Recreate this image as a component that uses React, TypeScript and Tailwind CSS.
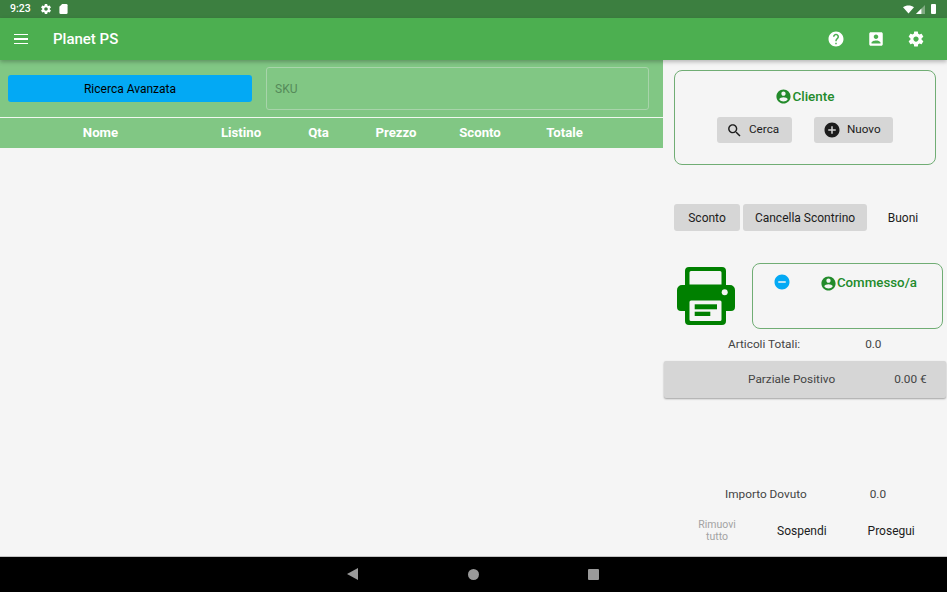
const ACCOUNT_CIRCLE =
  "M12 2C6.48 2 2 6.48 2 12s4.48 10 10 10 10-4.48 10-10S17.52 2 12 2zm0 3c1.66 0 3 1.34 3 3s-1.34 3-3 3-3-1.34-3-3 1.34-3 3-3zm0 14.2c-2.5 0-4.71-1.28-6-3.22.03-1.99 4-3.08 6-3.08 1.99 0 5.97 1.09 6 3.08-1.29 1.94-3.5 3.22-6 3.22z";
const HELP =
  "M12 2C6.48 2 2 6.48 2 12s4.48 10 10 10 10-4.48 10-10S17.52 2 12 2zm1 17h-2v-2h2v2zm2.07-7.75l-.9.92C13.45 12.9 13 13.5 13 15h-2v-.5c0-1.1.45-2.1 1.17-2.83l1.24-1.26c.37-.36.59-.86.59-1.41 0-1.1-.9-2-2-2s-2 .9-2 2H8c0-2.21 1.79-4 4-4s4 1.79 4 4c0 .88-.36 1.68-.93 2.25z";
const ACCOUNT_BOX =
  "M3 5v14c0 1.1.89 2 2 2h14c1.1 0 2-.9 2-2V5c0-1.1-.9-2-2-2H5c-1.11 0-2 .9-2 2zm12 4c0 1.66-1.34 3-3 3s-3-1.34-3-3 1.34-3 3-3 3 1.34 3 3zm-9 8c0-2 4-3.1 6-3.1s6 1.1 6 3.1v1H6v-1z";
const SETTINGS =
  "M19.43 12.98c.04-.32.07-.64.07-.98s-.03-.66-.07-.98l2.11-1.65c.19-.15.24-.42.12-.64l-2-3.46c-.12-.22-.39-.3-.61-.22l-2.49 1c-.52-.4-1.08-.73-1.69-.98l-.38-2.65C14.46 2.18 14.25 2 14 2h-4c-.25 0-.46.18-.49.42l-.38 2.65c-.61.25-1.17.59-1.69.98l-2.49-1c-.23-.09-.49 0-.61.22l-2 3.46c-.13.22-.07.49.12.64l2.11 1.65c-.04.32-.07.65-.07.98s.03.66.07.98l-2.11 1.65c-.19.15-.24.42-.12.64l2 3.46c.12.22.39.3.61.22l2.49-1c.52.4 1.08.73 1.69.98l.38 2.65c.03.24.24.42.49.42h4c.25 0 .46-.18.49-.42l.38-2.65c.61-.25 1.17-.59 1.69-.98l2.49 1c.23.09.49 0 .61-.22l2-3.46c.12-.22.07-.49-.12-.64l-2.11-1.65zM12 15.5c-1.93 0-3.5-1.57-3.5-3.5s1.57-3.5 3.5-3.5 3.5 1.57 3.5 3.5-1.57 3.5-3.5 3.5z";
const SEARCH =
  "M15.5 14h-.79l-.28-.27C15.41 12.59 16 11.11 16 9.5 16 5.91 13.09 3 9.5 3S3 5.91 3 9.5 5.91 16 9.5 16c1.61 0 3.09-.59 4.23-1.57l.27.28v.79l5 4.99L20.49 19l-4.99-5zm-6 0C7.01 14 5 11.99 5 9.5S7.01 5 9.5 5 14 7.01 14 9.5 11.99 14 9.5 14z";
const ADD_CIRCLE =
  "M12 2C6.48 2 2 6.48 2 12s4.48 10 10 10 10-4.48 10-10S17.52 2 12 2zm5 11h-4v4h-2v-4H7v-2h4V7h2v4h4v2z";
const REMOVE_CIRCLE =
  "M12 2C6.48 2 2 6.48 2 12s4.48 10 10 10 10-4.48 10-10S17.52 2 12 2zm5 11H7v-2h10v2z";

function Icon({ d, className }: { d: string; className: string }) {
  return (
    <svg viewBox="0 0 24 24" fill="currentColor" className={className}>
      <path d={d} />
    </svg>
  );
}

function StatusBar() {
  return (
    <div className="flex h-[18px] shrink-0 items-center bg-[#3c7f40] pl-[10px] pr-[11px] text-white">
      <span className="pt-px text-[10.5px] font-medium leading-none">9:23</span>
      <Icon d={SETTINGS} className="ml-[9px] h-[12px] w-[12px]" />
      <svg viewBox="0 0 9 11" fill="currentColor" className="ml-[7px] h-[10px] w-[9px]">
        <path d="M3 0h4.500A1.500 1.500 0 0 1 9 1.500v8A1.500 1.500 0 0 1 7.500 11h-6A1.500 1.500 0 0 1 0 9.500V3z" />
      </svg>
      <div className="ml-auto flex items-center">
        <svg viewBox="0 0 14 10" fill="currentColor" className="h-[9px] w-[11px]">
          <path d="M0 2.200C2 .8 4.400 0 7 0s5 .8 7 2.200L7 10z" />
        </svg>
        <svg viewBox="0 0 10 10" className="ml-[2px] h-[9px] w-[9px]">
          <path d="M10 0v10H0z" fill="#fff" fillOpacity="0.35" />
          <path d="M6 4v6H0z" fill="#fff" />
        </svg>
        <div className="ml-[6px] h-[10px] w-[5px] rounded-[1px] bg-white" />
      </div>
    </div>
  );
}

function AppBar() {
  return (
    <div className="relative z-10 flex h-[42px] shrink-0 items-center bg-[#4caf50] pl-[14px] pr-[22px] text-white shadow-[0_2px_4px_rgba(0,0,0,0.25)]">
      <div className="flex w-[14px] flex-col gap-[3px]">
        <div className="h-[1.5px] bg-white" />
        <div className="h-[1.5px] bg-white" />
        <div className="h-[1.5px] bg-white" />
      </div>
      <span className="ml-[25px] text-[15px] font-medium">Planet PS</span>
      <div className="ml-auto flex items-center gap-[22px]">
        <Icon d={HELP} className="h-[18px] w-[18px]" />
        <Icon d={ACCOUNT_BOX} className="h-[18px] w-[18px]" />
        <Icon d={SETTINGS} className="h-[18px] w-[18px]" />
      </div>
    </div>
  );
}

function ProductTable() {
  return (
    <div className="flex w-[663px] shrink-0 flex-col">
      <div className="flex h-[57px] items-start bg-[#81c784] pl-[8px] pr-[14px] pt-[7px]">
        <button className="mt-[8px] h-[27px] w-[244px] rounded-[3px] bg-[#03a9f4] text-[12px] text-black">
          Ricerca Avanzata
        </button>
        <div className="ml-[14px] flex h-[43px] flex-1 items-center rounded-[3px] border-[1.5px] border-[#a8d4aa] pl-[8px] text-[12px] text-[#558a59]">
          SKU
        </div>
      </div>
      <div className="h-px bg-[#f0f8f0]" />
      <div className="grid h-[30px] grid-cols-[201px_80px_75px_80px_88px_81px] items-center bg-[#81c784] text-center text-[13.2px] font-bold text-white">
        <span>Nome</span>
        <span>Listino</span>
        <span>Qta</span>
        <span>Prezzo</span>
        <span>Sconto</span>
        <span>Totale</span>
      </div>
    </div>
  );
}

function GreyButton({ children, className }: { children: React.ReactNode; className: string }) {
  return (
    <button
      className={`flex items-center justify-center rounded-[3px] bg-[#d6d6d6] text-[12px] text-[#1c1c1c] ${className}`}
    >
      {children}
    </button>
  );
}

function SidePanel() {
  return (
    <div className="flex flex-1 flex-col pt-[10px]">
      <div className="ml-[11px] flex h-[95px] w-[262px] flex-col items-center rounded-[8px] border border-[#70ad74] pt-[15px]">
        <div className="flex h-[20px] items-center text-[13.5px] font-medium text-[#238b2b]">
          <Icon d={ACCOUNT_CIRCLE} className="h-[17px] w-[17px]" />
          <span>Cliente</span>
        </div>
        <div className="mt-[11px] flex">
          <GreyButton className="h-[26px] w-[75px] !justify-start gap-[6px] pl-[9px] !text-[11.7px]">
            <Icon d={SEARCH} className="h-[17px] w-[17px]" />
            Cerca
          </GreyButton>
          <GreyButton className="ml-[22px] h-[26px] w-[79px] !justify-start gap-[6px] pl-[9px] !text-[11.7px]">
            <Icon d={ADD_CIRCLE} className="h-[18px] w-[18px]" />
            Nuovo
          </GreyButton>
        </div>
      </div>

      <div className="ml-[11px] mt-[39px] flex items-center">
        <GreyButton className="h-[27px] w-[66px]">Sconto</GreyButton>
        <GreyButton className="ml-[3px] h-[27px] w-[124px]">Cancella Scontrino</GreyButton>
        <span className="w-[72px] text-center text-[12px] text-[#1c1c1c]">Buoni</span>
      </div>

      <div className="ml-[14px] mt-[32px] flex items-start">
        <svg viewBox="0 0 58 58" className="mt-[4px] h-[58px] w-[58px]">
          <path
            fillRule="evenodd"
            fill="#008000"
            d="M12 0h33a4 4 0 0 1 4 4v14h4a5 5 0 0 1 5 5v17a4 4 0 0 1-4 4h-5v10a4 4 0 0 1-4 4H12a4 4 0 0 1-4-4V44H4a4 4 0 0 1-4-4V23a5 5 0 0 1 5-5h3V4a4 4 0 0 1 4-4zM14 4a1.500 1.500 0 0 0-1.500 1.500V17.500h32V5.500A1.500 1.500 0 0 0 43 4zM14 33.500a1.500 1.500 0 0 0-1.500 1.500v17.500A1.500 1.500 0 0 0 14 54h29a1.500 1.500 0 0 0 1.500-1.500V35a1.500 1.500 0 0 0-1.500-1.500z"
          />
          <circle cx="47.700" cy="25.300" r="3" fill="#f5f5f5" />
          <rect x="17.700" y="37.300" width="22.300" height="5" fill="#008000" />
          <rect x="17.700" y="44.700" width="15.600" height="4.300" fill="#008000" />
        </svg>
        <div className="relative ml-[17px] flex h-[66px] w-[191px] justify-end rounded-[8px] border border-[#70ad74] pr-[25px] pt-[10px]">
          <Icon d={REMOVE_CIRCLE} className="absolute left-[20px] top-[9px] h-[18px] w-[18px] text-[#03a9f4]" />
          <div className="flex h-[18px] items-center text-[13.3px] font-medium text-[#238b2b]">
            <Icon d={ACCOUNT_CIRCLE} className="h-[17px] w-[17px]" />
            <span>Commesso/a</span>
          </div>
        </div>
      </div>

      <div className="mt-[8px] flex h-[16px] items-center text-[11.8px] text-[#444]">
        <span className="ml-[65px]">Articoli Totali:</span>
        <span className="ml-[65px]">0.0</span>
      </div>

      <div className="ml-px mr-px mt-[8px] flex h-[37px] items-center rounded-[2px] bg-[#d6d6d6] text-[11.8px] text-[#444] shadow-[0_1px_2px_rgba(0,0,0,0.35)]">
        <span className="ml-[84px]">Parziale Positivo</span>
        <span className="ml-[59px]">0.00 €</span>
      </div>

      <div className="mt-[89px] flex h-[16px] items-center text-[11.8px] text-[#444]">
        <span className="ml-[62px]">Importo Dovuto</span>
        <span className="ml-[63px]">0.0</span>
      </div>

      <div className="mt-[16px] flex items-center text-[12px] text-[#1c1c1c]">
        <span className="ml-[34px] w-[40px] text-center text-[10.5px] leading-[12px] text-[#a3a3a3]">
          Rimuovi tutto
        </span>
        <span className="ml-[40px]">Sospendi</span>
        <span className="ml-[41px]">Prosegui</span>
      </div>
    </div>
  );
}

function NavBar() {
  return (
    <div className="flex h-[36px] shrink-0 items-center justify-center border-t border-[#c4c4c4] bg-black pb-[1px] pr-[1px]">
      <svg viewBox="0 0 11 12" className="h-[12px] w-[11px]">
        <path d="M11 0v12L0 6z" fill="#9a9a9a" />
      </svg>
      <div className="ml-[110px] h-[11px] w-[11px] rounded-full bg-[#9a9a9a]" />
      <div className="ml-[109px] h-[11px] w-[11px] rounded-[1px] bg-[#9a9a9a]" />
    </div>
  );
}

export default function App() {
  return (
    <div className="flex h-[592px] w-[947px] flex-col overflow-hidden bg-[#f5f5f5] font-['Roboto',sans-serif]">
      <StatusBar />
      <AppBar />
      <div className="flex flex-1">
        <ProductTable />
        <SidePanel />
      </div>
      <NavBar />
    </div>
  );
}
